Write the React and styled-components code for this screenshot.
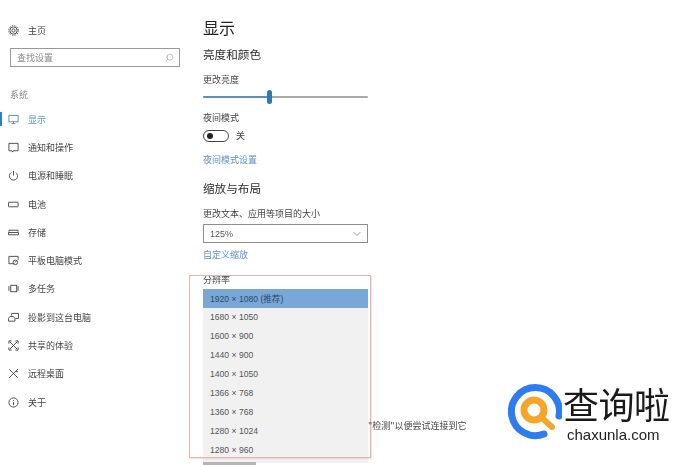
import React from "react";
import styled, { createGlobalStyle } from "styled-components";
import { Search, ChevronDown } from "lucide-react";

const Global = createGlobalStyle`
  html, body { margin: 0; padding: 0; background: #fff; }
  body { width: 682px; height: 465px; overflow: hidden; font-family: "Noto Sans CJK SC", "Liberation Sans", sans-serif; color: #333; }
`;
const Page = styled.div`
  position: relative; width: 682px; height: 465px; display: flex; overflow: hidden; filter: blur(0.35px);
`;
const Sidebar = styled.nav`
  width: 203px; flex: none; box-sizing: border-box; padding: 22px 0 0 0; display: flex; flex-direction: column;
`;
const Row = styled.div`
  position: relative; height: 28.3px; display: flex; align-items: center; gap: 9px; padding-left: 8px;
  font-size: 9px; color: ${p => (p.$active ? "#5c94c6" : "#444")};
  svg { width: 11px; height: 11px; flex: none; fill: none; stroke: ${p => (p.$active ? "#5a86ab" : "#444")}; stroke-width: 1; }
`;
const ActiveMark = styled.span`
  position: absolute; left: 0; top: 7px; width: 2px; height: 14px; background: #2f7fc4;
`;
const HomeRow = styled(Row)`
  height: 16px;
`;
const SearchBox = styled.div`
  box-sizing: border-box; width: 170px; height: 19px; margin: 10px 0 0 10px; border: 1px solid #999; display: flex; align-items: center; justify-content: space-between; padding: 0 5px 0 6px;
  font-size: 9px; color: #888;
  svg { width: 9px; height: 9px; color: #aaa; transform: scaleX(-1); }
`;
const SectionLabel = styled.div`
  font-size: 9px; color: #888; margin: 21px 0 3px 10px; line-height: 14px;
`;
const Main = styled.main`
  width: 165px; flex: none; display: flex; flex-direction: column; align-items: flex-start;
`;
const Title = styled.h1`
  margin: 16px 0 0; font-size: 16px; font-weight: 400; line-height: 23px; color: #222;
`;
const Heading = styled.h2`
  margin: ${p => p.$mt}px 0 0; font-size: 11.6px; font-weight: 400; line-height: 17px; color: #2c2c2c;
`;
const Label = styled.div`
  margin-top: ${p => p.$mt}px; font-size: 9px; line-height: 14px; color: #444;
`;
const Slider = styled.div`
  position: relative; margin-top: 9px; width: 165px; height: 2px; border-radius: 1px; background: linear-gradient(to right, #5b90b8 0 66px, #aaa 66px);
`;
const Thumb = styled.span`
  position: absolute; left: 64px; top: -6px; width: 5px; height: 14px; border-radius: 3px; background: #2f78b5;
`;
const ToggleRow = styled.div`
  margin-top: 4px; display: flex; align-items: center; gap: 7px; font-size: 9px; line-height: 14px; color: #444;
`;
const Toggle = styled.span`
  box-sizing: border-box; width: 26px; height: 12px; border: 1.5px solid #444; border-radius: 6px; display: flex; align-items: center; padding-left: 3px;
  &::before { content: ""; width: 6px; height: 6px; border-radius: 50%; background: #222; }
`;
const LinkText = styled.div`
  margin-top: ${p => p.$mt}px; font-size: 9px; line-height: 14px; color: #5b93c7;
`;
const Select = styled.div`
  box-sizing: border-box; margin-top: 3px; width: 165px; height: 19px; border: 1.5px solid #8f8f8f; display: flex; align-items: center; justify-content: space-between; padding: 0 4px 0 6px;
  font-family: "Liberation Sans", sans-serif; font-size: 9px; color: #555;
  svg { width: 12px; height: 12px; color: #999; }
`;
const Dropdown = styled.ul`
  position: absolute; left: 203px; top: 289px; width: 165px; height: 174px; margin: 0; padding: 0; list-style: none; background: #f1f1f1;
`;
const Option = styled.li`
  box-sizing: border-box; height: 18.9px; padding-left: 7px; display: flex; align-items: center; font-family: "Liberation Sans", "Noto Sans CJK SC", sans-serif; font-size: 8.6px; color: ${p => (p.$sel ? "#2c4a6c" : "#555")};
  background: ${p => (p.$sel ? "#79a7d8" : "transparent")};
`;
const ScrollPeek = styled.div`
  position: absolute; left: 203px; top: 462px; width: 53px; height: 3px; background: #b5b5b5;
`;
const Callout = styled.div`
  position: absolute; left: 189px; top: 275px; width: 182px; height: 183px; box-sizing: border-box; border: 1px solid #e9b2b6; box-shadow: 1px 1px 1px rgba(200,150,150,.25);
`;
const Hint = styled.div`
  position: absolute; left: 368px; top: 419px; font-size: 9px; line-height: 14px; color: #444; white-space: nowrap;
`;
const Brand = styled.div`
  position: absolute; left: 508px; top: 382px; display: flex; align-items: flex-start; gap: 0;
`;
const BrandText = styled.div`
  display: flex; flex-direction: column; align-items: flex-start;
`;
const BrandName = styled.div`
  font-family: "Noto Sans CJK SC", sans-serif; font-size: 36px; font-weight: 400; line-height: 42px; color: #1a1a1a; letter-spacing: -.5px; white-space: nowrap; margin-left: 1px;
`;
const BrandUrl = styled.div`
  font-family: "Liberation Sans", sans-serif; font-size: 15px; line-height: 16px; color: #222; margin: 3px 0 0 5px;
`;
const LogoMark = () => (
  <svg width="54" height="58" viewBox="0 0 54 58">
    <path d="M36 52 A24 24 0 1 1 51 34" fill="none" stroke="#2f7cf0" strokeWidth="7" strokeLinecap="round" />
    <circle cx="26" cy="28" r="10" fill="none" stroke="#f5a52a" strokeWidth="7" />
    <path d="M34 36 L44 45" stroke="#f5a52a" strokeWidth="6" strokeLinecap="round" />
  </svg>
);

const Ico = ({ children }) => <svg viewBox="0 0 12 12">{children}</svg>;
const icons = {
  home: <Ico><circle cx="6" cy="6" r="1.8" /><circle cx="6" cy="6" r="4" /><circle cx="6" cy="6" r="5.3" strokeDasharray="1.4 1.4" /></Ico>,
  display: <Ico><rect x="1" y="1.5" width="10" height="7" /><path d="M4 10.5h4M6 8.5v2" /></Ico>,
  notify: <Ico><path d="M1 1.5h10v8H6l-1 1.5-1-1.5H1z" /></Ico>,
  power: <Ico><path d="M6 1v5" /><path d="M3.5 2.8a4.5 4.5 0 1 0 5 0" /></Ico>,
  battery: <Ico><rect x="0.5" y="3.5" width="10.5" height="5" rx=".5" /></Ico>,
  storage: <Ico><path d="M1 5V3.5h10V5M0.5 8.5h11V6H.5z" /></Ico>,
  tablet: <Ico><path d="M7 9.5H1v-8h10V5" /><circle cx="8" cy="8" r="2.5" /><path d="M8 8l1-1.5" /></Ico>,
  multi: <Ico><rect x="3" y="2.5" width="6.5" height="7" /><path d="M1 3.5v5M11 3.5v5" /></Ico>,
  project: <Ico><path d="M4 4V1.5h7.5V7H8" /><path d="M.5 10h7V7L6 5H2L.5 7z" /></Ico>,
  share: <Ico><path d="M2 2l8 8M10 2l-8 8" /><path d="M1 4V1h3M8 1h3v3M1 8v3h3M8 11h3V8" /></Ico>,
  remote: <Ico><path d="M1.5 1.5l9 9M11 1L1 11" /><path d="M8 4l3 0" /></Ico>,
  about: <Ico><circle cx="6" cy="6" r="5" /><path d="M6 5.5V9M6 3.4v1" /></Ico>,
};
const items = [
  ["notify", "通知和操作"], ["power", "电源和睡眠"], ["battery", "电池"], ["storage", "存储"],
  ["tablet", "平板电脑模式"], ["multi", "多任务"], ["project", "投影到这台电脑"], ["share", "共享的体验"],
  ["remote", "远程桌面"], ["about", "关于"],
];
const modes = ["1680 × 1050", "1600 × 900", "1440 × 900", "1400 × 1050", "1366 × 768", "1360 × 768", "1280 × 1024", "1280 × 960"];

export default function App() {
  return (
    <Page>
      <Global />
      <Sidebar>
        <HomeRow>{icons.home}主页</HomeRow>
        <SearchBox>查找设置<Search /></SearchBox>
        <SectionLabel>系统</SectionLabel>
        <Row $active><ActiveMark />{icons.display}显示</Row>
        {items.map(([k, text]) => <Row key={text}>{icons[k]}{text}</Row>)}
      </Sidebar>
      <Main>
        <Title>显示</Title>
        <Heading $mt={7}>亮度和颜色</Heading>
        <Label $mt={10}>更改亮度</Label>
        <Slider><Thumb /></Slider>
        <Label $mt={13}>夜间模式</Label>
        <ToggleRow><Toggle />关</ToggleRow>
        <LinkText $mt={10}>夜间模式设置</LinkText>
        <Heading $mt={13}>缩放与布局</Heading>
        <Label $mt={10}>更改文本、应用等项目的大小</Label>
        <Select>125%<ChevronDown /></Select>
        <LinkText $mt={5}>自定义缩放</LinkText>
        <Label $mt={11}>分辨率</Label>
      </Main>
      <Dropdown>
        <Option $sel>1920 × 1080 (推荐)</Option>
        {modes.map(m => <Option key={m}>{m}</Option>)}
      </Dropdown>
      <ScrollPeek />
      <Callout />
      <Hint>"检测"以便尝试连接到它</Hint>
      <Brand>
        <LogoMark />
        <BrandText>
          <BrandName>查询啦</BrandName>
          <BrandUrl>chaxunla.com</BrandUrl>
        </BrandText>
      </Brand>
    </Page>
  );
}
